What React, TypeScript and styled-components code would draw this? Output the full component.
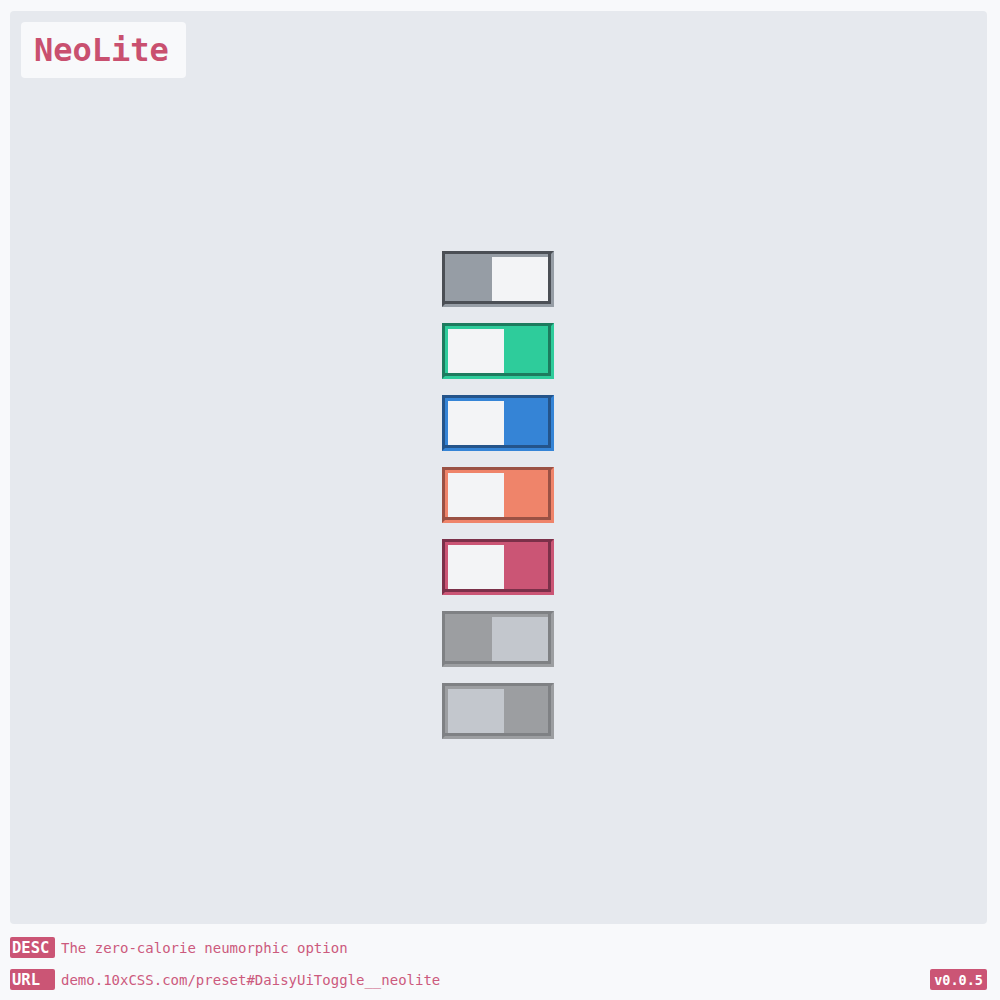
import React from "react";
import styled, { createGlobalStyle } from "styled-components";

const Global = createGlobalStyle`
  html, body { margin: 0; padding: 0; background: #f8f9fb; }
  * { box-sizing: border-box; }
  body { font-family: "DejaVu Sans Mono", "Liberation Mono", monospace; }
`;

const Page = styled.div`
  width: 1000px;
  height: 1000px;
  display: flex;
  flex-direction: column;
  padding: 11px 13px 0 10px;
`;

const Panel = styled.div`
  height: 913px;
  background: #e6e9ee;
  border-radius: 4px;
  padding: 11px;
  display: flex;
  flex-direction: column;
`;

const TitleBox = styled.div`
  align-self: flex-start;
  height: 56px;
  width: 165px;
  background: #f8f9fb;
  border-radius: 4px;
  display: flex;
  align-items: center;
  padding-left: 13px;
  color: #c9506f;
  font-weight: bold;
  font-size: 32px;
`;

const Stage = styled.div`
  flex: 1;
  display: flex;
  flex-direction: column;
  align-items: center;
  justify-content: center;
  gap: 16px;
  padding: 0 2px 2px 0;
`;

const Toggle = styled.div<{ $accent: string; $dark: string; $checked: boolean }>`
  width: 112px;
  height: 56px;
  border: 3px solid;
  border-color: ${(p) => p.$dark} ${(p) => p.$accent} ${(p) => p.$accent} ${(p) => p.$dark};
  background: ${(p) => p.$accent};
  padding: 3px;
  box-shadow: inset -3px -3px 0 0 ${(p) => p.$dark};
  display: flex;
  justify-content: ${(p) => (p.$checked ? "flex-start" : "flex-end")};
`;

const Knob = styled.div<{ $color: string }>`
  width: 56px;
  height: 44px;
  background: ${(p) => p.$color};
`;

const Footer = styled.div`
  display: flex;
  flex-direction: column;
  gap: 11px;
  padding-top: 13px;
`;

const Row = styled.div`
  display: flex;
  align-items: center;
  gap: 6px;
  height: 21px;
`;

const Label = styled.span<{ $small?: boolean }>`
  display: inline-flex;
  align-items: center;
  height: 21px;
  min-width: 45px;
  padding: ${(p) => (p.$small ? "0 4px" : "0 2px")};
  background: #cb5575;
  color: #ffffff;
  font-weight: bold;
  font-size: ${(p) => (p.$small ? "13.5px" : "15.5px")};
  border-radius: 2px;
`;

const Text = styled.span`
  color: #cc5a7d;
  font-size: 14px;
`;

const Spacer = styled.div`
  flex: 1;
`;

const toggles = [
  { accent: "#969da5", dark: "#4b4f55", knob: "#f3f4f6", checked: false },
  { accent: "#2ecc9b", dark: "#1d7b5e", knob: "#f3f4f6", checked: true },
  { accent: "#3584d6", dark: "#24548a", knob: "#f3f4f6", checked: true },
  { accent: "#ef846a", dark: "#9a5144", knob: "#f3f4f6", checked: true },
  { accent: "#cb5575", dark: "#7b3049", knob: "#f3f4f6", checked: true },
  { accent: "#9c9ea1", dark: "#7f8184", knob: "#c3c7cd", checked: false },
  { accent: "#9c9ea1", dark: "#7f8184", knob: "#c3c7cd", checked: true },
];

export default function App() {
  return (
    <>
      <Global />
      <Page>
        <Panel>
          <TitleBox>NeoLite</TitleBox>
          <Stage>
            {toggles.map((t, i) => (
              <Toggle key={i} $accent={t.accent} $dark={t.dark} $checked={t.checked}>
                <Knob $color={t.knob} />
              </Toggle>
            ))}
          </Stage>
        </Panel>
        <Footer>
          <Row>
            <Label>DESC</Label>
            <Text>The zero-calorie neumorphic option</Text>
          </Row>
          <Row>
            <Label>URL</Label>
            <Text>demo.10xCSS.com/preset#DaisyUiToggle__neolite</Text>
            <Spacer />
            <Label $small>v0.0.5</Label>
          </Row>
        </Footer>
      </Page>
    </>
  );
}
